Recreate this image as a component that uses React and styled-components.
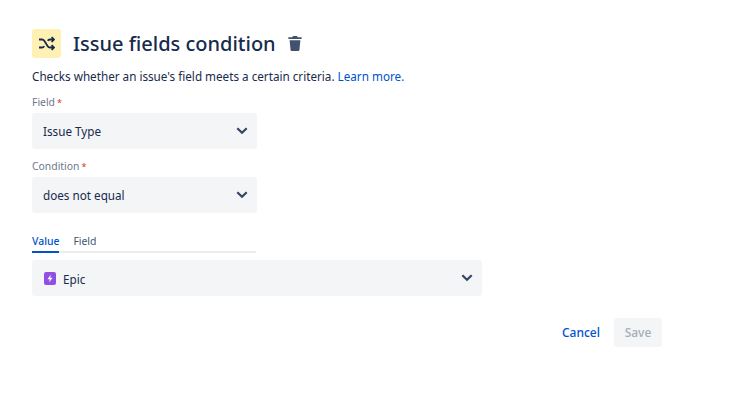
import React from "react";
import styled, { createGlobalStyle } from "styled-components";

const Global = createGlobalStyle`
  html, body { margin: 0; padding: 0; background: #fff; }
  body { font-family: "Noto Sans", "Open Sans", sans-serif; color: #172b4d; }
`;

const Page = styled.div`
  width: 735px;
  height: 417px;
  box-sizing: border-box;
  padding: 29px 73px 0 32px;
  overflow: hidden;
`;

const Header = styled.div`
  display: flex;
  align-items: center;
  height: 29px;
`;

const IconTile = styled.div`
  width: 29px;
  height: 29px;
  border-radius: 3px;
  background: #fff0b3;
  display: flex;
  align-items: center;
  justify-content: center;
  margin-right: 12px;
`;

const Title = styled.h1`
  margin: 0 11px 0 0;
  font-size: 20px;
  line-height: 29px;
  font-weight: 500;
  color: #172b4d;
`;

const Description = styled.p`
  margin: 8px 0 0;
  font-size: 11.7px;
  line-height: 20px;
  color: #172b4d;
`;

const LearnMore = styled.a`
  color: #0052cc;
  text-decoration: none;
`;

const Field = styled.div`
  width: 225px;
  margin-top: ${(p) => p.$top}px;
`;

const Label = styled.label`
  display: block;
  height: 14px;
  font-size: 10.4px;
  line-height: 14px;
  font-weight: 400;
  color: #6b778c;
  margin-bottom: 4px;
`;

const Star = styled.span`
  color: #de350b;
  font-size: 9px;
  margin-left: 2px;
`;

const Select = styled.div`
  height: 36px;
  width: ${(p) => p.$width}px;
  box-sizing: border-box;
  padding: 0 3px 0 11px;
  border-radius: 3px;
  background: #f4f5f7;
  display: flex;
  align-items: center;
  justify-content: space-between;
  font-size: 11.7px;
  color: #172b4d;
`;

const SelectValue = styled.span`
  display: flex;
  align-items: center;
  gap: 7px;
  padding: 1px 0 0 1px;
`;

const Tabs = styled.div`
  width: 224px;
  margin-top: 20px;
  display: flex;
  gap: 14px;
  border-bottom: 2px solid #ebecf0;
  height: 18px;
`;

const Tab = styled.div`
  font-size: 10.4px;
  font-weight: ${(p) => (p.$active ? 500 : 400)};
  line-height: 16px;
  height: 18px;
  color: ${(p) => (p.$active ? "#0052cc" : "#42526e")};
  border-bottom: 2px solid ${(p) => (p.$active ? "#0052cc" : "transparent")};
`;

const ValueRow = styled.div`
  margin-top: 7px;
`;

const Footer = styled.div`
  width: 630px;
  margin-top: 22px;
  display: flex;
  justify-content: flex-end;
  align-items: center;
  gap: 14px;
`;

const CancelButton = styled.button`
  border: 0;
  background: none;
  padding: 0;
  font: inherit;
  font-size: 12px;
  font-weight: 500;
  color: #0052cc;
`;

const SaveButton = styled.button`
  border: 0;
  width: 48px;
  height: 29px;
  border-radius: 3px;
  background: #f4f5f7;
  font: inherit;
  font-size: 12px;
  font-weight: 500;
  color: #a5adba;
`;

const Chevron = () => (
  <svg width="24" height="24" viewBox="0 0 24 24">
    <path d="M7.300 9.200 12 13.800l4.700-4.600" fill="none" stroke="#344563" strokeWidth="2.200" />
  </svg>
);

const Shuffle = () => (
  <svg width="17" height="17" viewBox="0 0 17 17" fill="none" stroke="#172b4d" strokeWidth="1.800">
    <path d="M1 4.500h3c1 0 1.700.5 2.300 1.300l3.400 5.400c.5.800 1.200 1.300 2.200 1.300h3.600" />
    <path d="M1 12.500h3c1 0 1.700-.5 2.300-1.300M9.700 5.800c.5-.8 1.200-1.300 2.200-1.300h3.600" />
    <path d="M13.600 2.200l2.300 2.300-2.300 2.300M13.600 10.200l2.300 2.300-2.300 2.300" />
  </svg>
);

const Trash = () => (
  <svg width="16" height="17" viewBox="0 0 16 18">
    <path d="M5.800 1h4.400l.6 1.300H15v2H1v-2h4.200zM2.300 5.500h11.400l-1 10.500c-.1.600-.5 1-1.100 1H4.400c-.6 0-1-.4-1.100-1z" fill="#42526e" />
  </svg>
);

const EpicIcon = () => (
  <svg width="12" height="13" viewBox="0 0 12 13">
    <rect width="12" height="13" rx="2" fill="#904ee2" />
    <path d="M6.800 2.500 3.500 7.200h2.300L5.200 10.500 8.500 5.800H6.200z" fill="#fff" />
  </svg>
);

export default function App() {
  return (
    <Page>
      <Global />
      <Header>
        <IconTile><Shuffle /></IconTile>
        <Title>Issue fields condition</Title>
        <Trash />
      </Header>
      <Description>
        Checks whether an issue's field meets a certain criteria. <LearnMore href="#">Learn more.</LearnMore>
      </Description>
      <Field $top={9}>
        <Label>Field<Star>*</Star></Label>
        <Select $width={225}>Issue Type<Chevron /></Select>
      </Field>
      <Field $top={10}>
        <Label>Condition<Star>*</Star></Label>
        <Select $width={225}>does not equal<Chevron /></Select>
      </Field>
      <Tabs>
        <Tab $active>Value</Tab>
        <Tab>Field</Tab>
      </Tabs>
      <ValueRow>
        <Select $width={450}>
          <SelectValue><EpicIcon />Epic</SelectValue>
          <Chevron />
        </Select>
      </ValueRow>
      <Footer>
        <CancelButton>Cancel</CancelButton>
        <SaveButton disabled>Save</SaveButton>
      </Footer>
    </Page>
  );
}
